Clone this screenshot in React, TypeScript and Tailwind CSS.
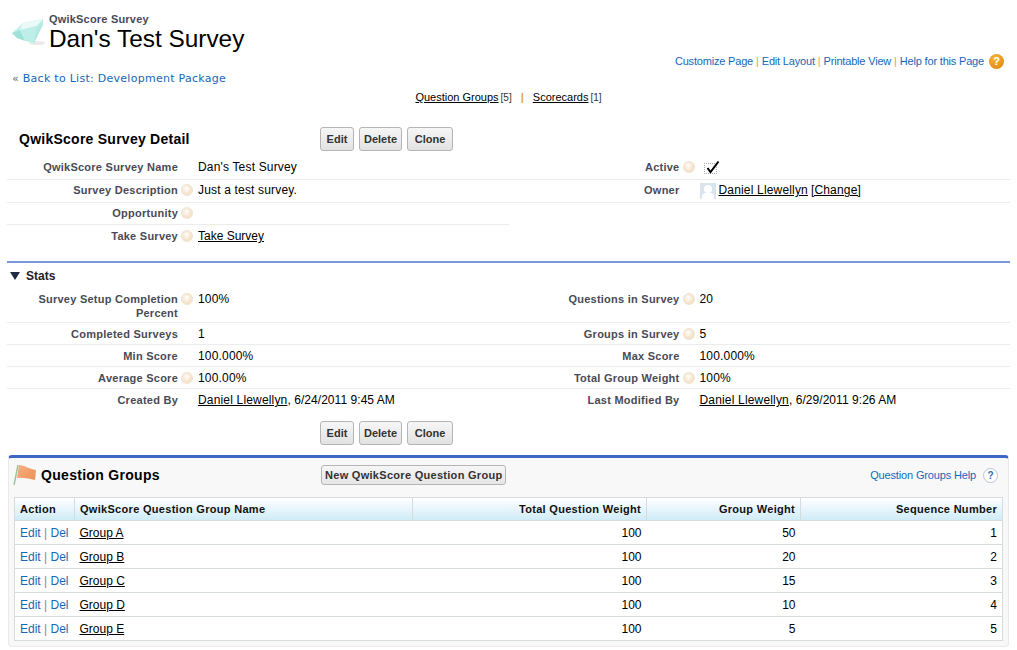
const Help = () => (
  <span className="block h-3 w-3 rounded-full border border-[#efe3d3] bg-[radial-gradient(circle_at_40%_35%,#fdf6ec,#f2d9b8)] text-center text-[8px] leading-[10px] font-bold text-white">
    ?
  </span>
)

const Row = ({ label, help, children, line = true, pad = 'pt-[4px] pb-[3px]' }: any) => (
  <div className={`flex min-w-0 flex-1 ${pad} ${line ? 'border-b border-[#ececec]' : ''}`}>
    <div className="w-[171px] shrink-0 text-right text-[11px] leading-[14px] font-bold tracking-[0.25px] text-[#4a4a56]">{label}</div>
    <div className="w-5 shrink-0 pt-px pl-[3px]">{help && <Help />}</div>
    <div className="flex-1 text-[12px] leading-[14px] tracking-[0.17px] text-black">{children}</div>
  </div>
)

const Btn = ({ children, width }: { children: string; width: string }) => (
  <button className={`h-6 rounded-[3px] border border-[#b5b5b5] bg-[linear-gradient(#f6f6f6,#e2e2e2)] text-[11px] font-bold text-[#333] ${width}`}>
    {children}
  </button>
)

const Buttons = () => (
  <div className="flex gap-[5px]">
    <Btn width="w-[34px]">Edit</Btn>
    <Btn width="w-[43px]">Delete</Btn>
    <Btn width="w-[46px]">Clone</Btn>
  </div>
)

const groups = [
  ['Group A', 50, 1],
  ['Group B', 20, 2],
  ['Group C', 15, 3],
  ['Group D', 10, 4],
  ['Group E', 5, 5],
]

export default function App() {
  return (
    <div className="h-[650px] w-[1017px] overflow-hidden bg-white font-['Liberation_Sans',Arial,sans-serif] text-black">
      {/* Page title */}
      <div className="relative h-[90px]">
        <div className="flex pt-[13px] pl-3">
          <svg width="34" height="34" viewBox="0 0 34 34" className="mt-[4px]">
            <defs>
              <linearGradient id="gem" x1="0" y1="0" x2="1" y2="1">
                <stop offset="0" stopColor="#d8f5f1" />
                <stop offset="1" stopColor="#9fe2da" />
              </linearGradient>
            </defs>
            <ellipse cx="25" cy="26" rx="8" ry="2" fill="#e8ebe8" />
            <path d="M0 16 L11 6 L31 2 L31 8 L22 26 L5 21 Z" fill="url(#gem)" />
            <path d="M11 6 L31 2 L25 9 L8 13 Z" fill="#e9faf8" />
            <path d="M0 16 L8 13 L13 24 L5 21 Z" fill="#a0e2da" />
            <path d="M8 13 L25 9 L22 26 L13 24 Z" fill="#bdeee8" />
          </svg>
          <div className="ml-[3px]">
            <div className="text-[11px] leading-[12px] font-bold tracking-[0.2px] text-[#4a4a56]">QwikScore Survey</div>
            <div className="text-[24.4px] leading-[27px]">Dan's Test Survey</div>
          </div>
        </div>
        <div className="absolute top-[53px] right-[13px] flex items-center text-[11px] tracking-[-0.18px] text-[#1468b8]">
          <span>Customize Page</span>
          <span className="mx-[3px] text-[#e8a33d]">|</span>
          <span>Edit Layout</span>
          <span className="mx-[3px] text-[#e8a33d]">|</span>
          <span>Printable View</span>
          <span className="mx-[3px] text-[#e8a33d]">|</span>
          <span>Help for this Page</span>
          <span className="ml-[5px] inline-block h-[15px] w-[15px] rounded-full bg-[radial-gradient(circle_at_40%_30%,#f8b733,#d97f0c)] text-center text-[11px] leading-[15px] font-bold text-white">?</span>
        </div>
        <div className="absolute top-[72px] left-[12px] font-['DejaVu_Sans',sans-serif] text-[11px] leading-[14px] tracking-[0.27px] text-[#1468b8]">
          <span className="text-[#666]">« </span>Back to List: Development Package
        </div>
      </div>

      {/* Related list links */}
      <div className="flex h-[15px] items-center justify-center text-[11px] text-black">
        <span className="underline">Question Groups</span>
        <span className="ml-[2px] text-[10px] text-[#333]">[5]</span>
        <span className="mx-[9px] font-bold text-[#e8a33d]">|</span>
        <span className="underline">Scorecards</span>
        <span className="ml-[2px] text-[10px] text-[#333]">[1]</span>
      </div>

      {/* Detail */}
      <div className="mx-[7px] mt-[22px]">
        <div className="flex h-6 items-center">
          <div className="w-[313px] pl-3 text-[14px] font-bold tracking-[0.25px]">QwikScore Survey Detail</div>
          <Buttons />
        </div>
        <div className="mt-[5px] flex">
          <Row label="QwikScore Survey Name" pad="pt-[4px] pb-[5px]">Dan's Test Survey</Row>
          <Row label="Active" help pad="pt-[4px] pb-[5px]">
            <span className="relative mt-[3px] ml-[4px] block h-[11px] w-[13px] border border-dotted border-[#aaa]">
              <svg width="16" height="15" viewBox="0 0 16 15" className="absolute -top-[4px] left-0">
                <path d="M2.5 8 L5.5 12 L13.5 1.5" fill="none" stroke="#000" strokeWidth="2" />
              </svg>
            </span>
          </Row>
        </div>
        <div className="flex">
          <Row label="Survey Description" help pad="pt-[3px] pb-[4px]">Just a test survey.</Row>
          <Row label="Owner" pad="pt-[3px] pb-[4px]">
            <div className="flex h-[15px] items-start">
              <span className="relative mr-[3px] h-4 w-4 shrink-0 overflow-hidden bg-[#d9e4ee]">
                <span className="absolute top-[2px] left-[4px] h-[8px] w-[8px] rounded-full bg-white" />
                <span className="absolute top-[10px] left-[2px] h-[6px] w-3 rounded-t-[4px] bg-white" />
              </span>
              <span className="underline">Daniel Llewellyn</span>
              <span className="ml-[3px] underline">[Change]</span>
            </div>
          </Row>
        </div>
        <div className="w-[502px]">
          <div className="flex"><Row label="Opportunity" help pad="pt-[3px] pb-[4px]" /></div>
          <div className="flex"><Row label="Take Survey" help line={false} pad="py-[4px]"><span className="tracking-normal underline">Take Survey</span></Row></div>
        </div>
      </div>

      {/* Stats */}
      <div className="mx-[7px] mt-[14px] border-t-2 border-[#7d98d8] pt-[5px]">
        <div className="flex h-[15px] items-center pl-[3px] text-[12px] font-bold text-[#222]">
          <svg width="10" height="8" viewBox="0 0 10 8" className="mr-[6px]"><path d="M0 0 H10 L5 8 Z" fill="#1f2a44" /></svg>
          Stats
        </div>
        <div className="mt-[5px] flex">
          <Row label={<>Survey Setup Completion Percent</>} help pad="pt-[4px] pb-[2px]">100%</Row>
          <Row label="Questions in Survey" help pad="pt-[4px] pb-[2px]">20</Row>
        </div>
        <div className="flex">
          <Row label="Completed Surveys">1</Row>
          <Row label="Groups in Survey" help>5</Row>
        </div>
        <div className="flex">
          <Row label="Min Score">100.000%</Row>
          <Row label="Max Score">100.000%</Row>
        </div>
        <div className="flex">
          <Row label="Average Score" help>100.00%</Row>
          <Row label="Total Group Weight" help>100%</Row>
        </div>
        <div className="flex">
          <Row label="Created By" line={false} pad="py-[4px]"><span className="underline">Daniel Llewellyn</span><span className="tracking-[0.05px]">, 6/24/2011 9:45 AM</span></Row>
          <Row label="Last Modified By" line={false} pad="py-[4px]"><span className="underline">Daniel Llewellyn</span><span className="tracking-[0.05px]">, 6/29/2011 9:26 AM</span></Row>
        </div>
        <div className="mt-[10px] pl-[313px]"><Buttons /></div>
      </div>

      {/* Question groups */}
      <div className="mx-2 mt-[10px] h-[192px] rounded-[4px] border border-t-[3px] border-[#eaeaea] border-t-[#3d67c4] bg-[#f8f8f8] px-[5px]">
        <div className="flex h-[38px] items-center pb-[4px]">
          <svg width="24" height="22" viewBox="0 0 24 22" className="ml-[-1px]">
            <defs>
              <linearGradient id="flag" x1="0" y1="0" x2="1" y2="1">
                <stop offset="0" stopColor="#f7b284" />
                <stop offset="1" stopColor="#ee8f55" />
              </linearGradient>
            </defs>
            <path d="M5 1 L1 21" stroke="#9cc79c" strokeWidth="1.5" />
            <path d="M6 1 C11 1 16 5 23 6 L22 16 C17 15 10 13 4 14 Z" fill="url(#flag)" />
          </svg>
          <div className="ml-[4px] w-[280px] text-[14px] font-bold tracking-[0.3px]">Question Groups</div>
          <button className="h-[20px] rounded-[3px] border border-[#b5b5b5] bg-[linear-gradient(#f6f6f6,#e6e6e6)] px-[3px] text-[11px] font-bold tracking-[0.29px] text-[#333]">New QwikScore Question Group</button>
          <div className="mr-[5px] ml-auto flex items-center text-[11px] tracking-[-0.15px] text-[#1468b8]">
            Question Groups Help
            <span className="ml-[7px] inline-block h-[15px] w-[15px] rounded-full border border-[#b9c4d4] bg-white text-center text-[10px] leading-[13px] font-bold text-[#2f6fc0]">?</span>
          </div>
        </div>
        <table className="mt-px w-[989px] table-fixed border-collapse border border-[#d5dadd] bg-white text-[12px]">
          <thead>
            <tr className="h-[23px] bg-[linear-gradient(#ffffff,#cdebf7)] text-[11px] font-bold tracking-[0.3px] text-[#111]">
              <th className="w-[60px] border-r border-[#d5dadd] pl-[5px] text-left">Action</th>
              <th className="w-[338px] border-r border-[#d5dadd] pl-[5px] text-left">QwikScore Question Group Name</th>
              <th className="w-[234px] border-r border-[#d5dadd] pr-[5px] text-right">Total Question Weight</th>
              <th className="w-[154px] border-r border-[#d5dadd] pr-[5px] text-right">Group Weight</th>
              <th className="pr-[5px] text-right">Sequence Number</th>
            </tr>
          </thead>
          <tbody>
            {groups.map(([name, weight, seq]) => (
              <tr key={name} className="h-6 border-t border-[#d5dadd]">
                <td className="pl-[5px] text-[#1468b8]">Edit <span className="text-[#888]">|</span> Del</td>
                <td className="pl-[5px]"><span className="underline">{name}</span></td>
                <td className="pr-[5px] text-right">100</td>
                <td className="pr-[5px] text-right">{weight}</td>
                <td className="pr-[5px] text-right">{seq}</td>
              </tr>
            ))}
          </tbody>
        </table>
      </div>
    </div>
  )
}
